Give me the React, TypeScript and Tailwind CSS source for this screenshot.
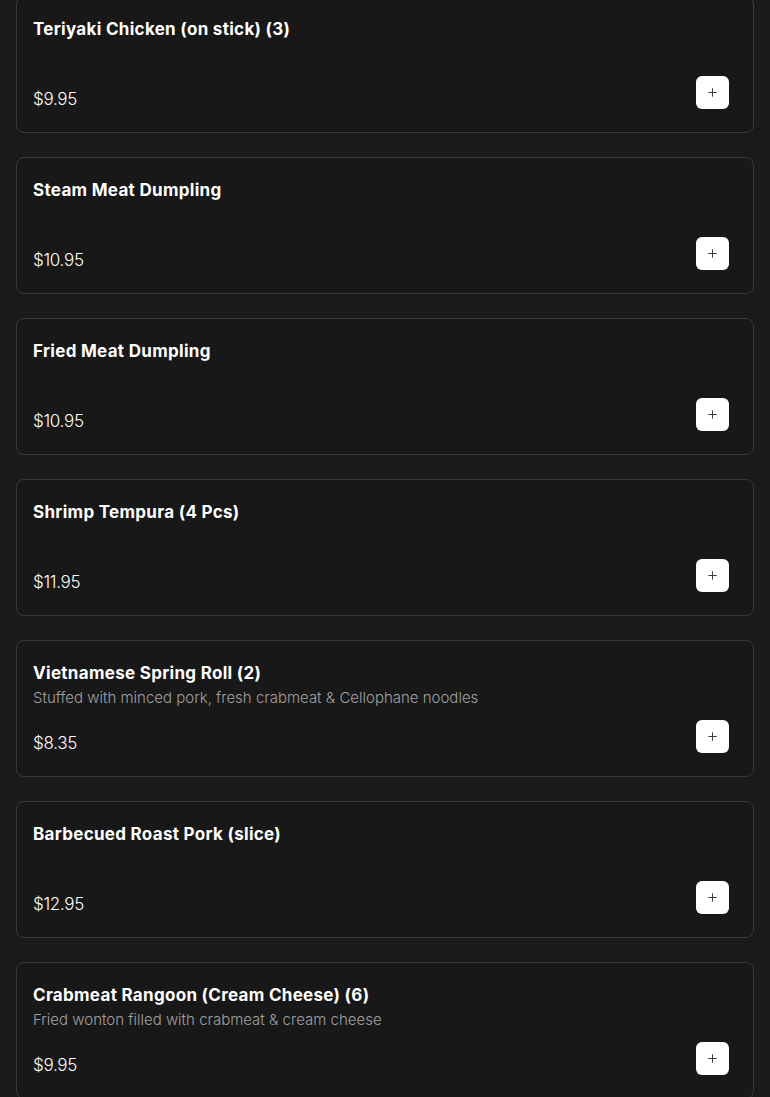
import { Plus } from "lucide-react";

type Item = {
  name: string;
  description?: string;
  price: string;
};

const items: Item[] = [
  { name: "Teriyaki Chicken (on stick) (3)", price: "$9.95" },
  { name: "Steam Meat Dumpling", price: "$10.95" },
  { name: "Fried Meat Dumpling", price: "$10.95" },
  { name: "Shrimp Tempura (4 Pcs)", price: "$11.95" },
  {
    name: "Vietnamese Spring Roll (2)",
    description: "Stuffed with minced pork, fresh crabmeat & Cellophane noodles",
    price: "$8.35",
  },
  { name: "Barbecued Roast Pork (slice)", price: "$12.95" },
  {
    name: "Crabmeat Rangoon (Cream Cheese) (6)",
    description: "Fried wonton filled with crabmeat & cream cheese",
    price: "$9.95",
  },
];

function MenuItemCard({ item }: { item: Item }) {
  return (
    <div className="h-[137px] rounded-lg border border-[#3a3a3a] bg-[#181818] pl-4 pr-6 pt-[19px] flex flex-col">
      <h3 className="text-[17px] leading-[26px] font-bold text-white tracking-[0.3px]">
        {item.name}
      </h3>
      {item.description && (
        <p className="text-[15px] leading-[24px] font-light text-[#a0a0a0]">{item.description}</p>
      )}
      <div className="mt-auto mb-[21px] flex items-start justify-between">
        <span className="mt-[11px] text-[17px] leading-[24px] font-light text-white tracking-[-0.3px]">
          {item.price}
        </span>
        <button className="w-[33px] h-[33px] rounded-md bg-white flex items-center justify-center text-[#333]">
          <Plus size={13} strokeWidth={1.75} />
        </button>
      </div>
    </div>
  );
}

export default function App() {
  return (
    <div
      className="min-h-screen bg-[#1a1a1a] overflow-hidden"
      style={{ fontFamily: "Inter, 'Noto Sans', sans-serif" }}
    >
      <div className="mt-[-4px] px-4 flex flex-col gap-6">
        {items.map((item) => (
          <MenuItemCard key={item.name} item={item} />
        ))}
      </div>
    </div>
  );
}
